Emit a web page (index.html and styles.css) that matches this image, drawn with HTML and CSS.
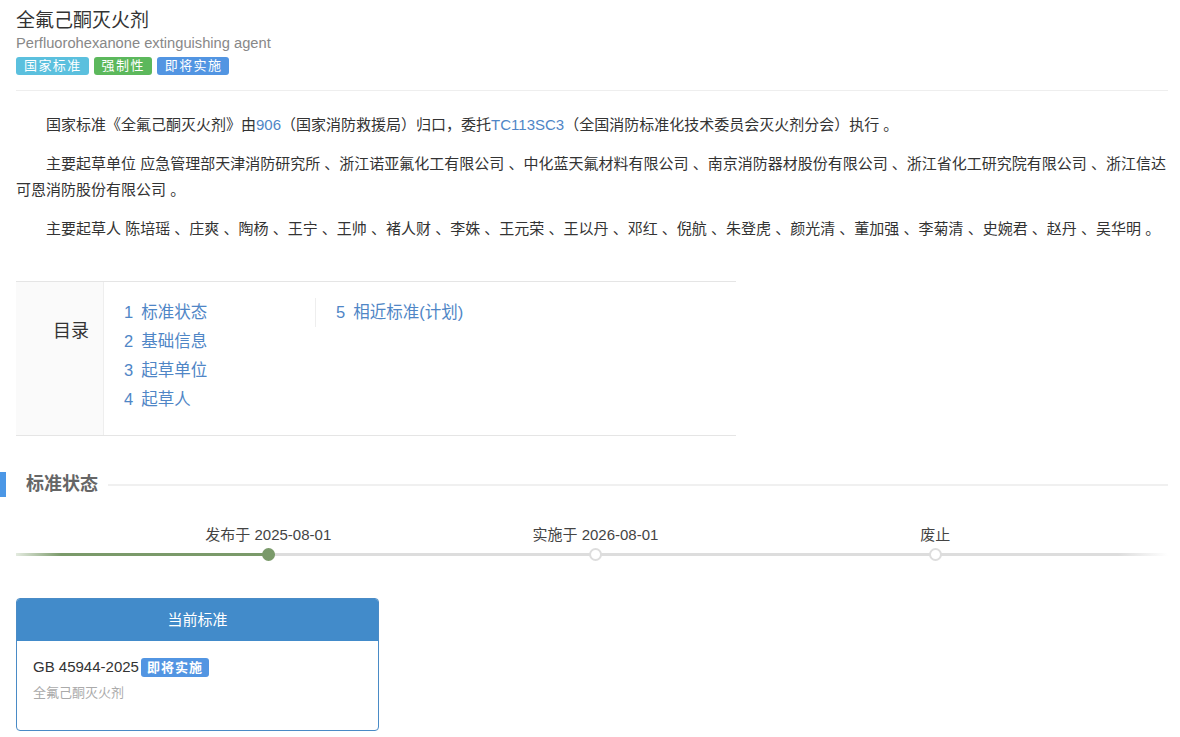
FILE: index.html
```html
<!DOCTYPE html>
<html lang="zh-CN">
<head>
    <meta charset="UTF-8">
    <meta name="viewport" content="width=device-width, initial-scale=1.0">
    <title>全氟己酮灭火剂</title>
    <link rel="stylesheet" href="styles.css">
</head>
<body>
    <div class="page">
        <div class="std-head">
            <h1 class="std-title">全氟己酮灭火剂</h1>
            <div class="std-en">Perfluorohexanone extinguishing agent</div>
            <div class="tags">
                <span class="tag tag-info">国家标准</span>
                <span class="tag tag-green">强制性</span>
                <span class="tag tag-blue">即将实施</span>
            </div>
        </div>

        <div class="intro">
            <p>国家标准《全氟己酮灭火剂》由<a href="#">906</a>（国家消防救援局）归口，委托<a href="#">TC113SC3</a>（全国消防标准化技术委员会灭火剂分会）执行 。</p>
            <p>主要起草单位 应急管理部天津消防研究所 、浙江诺亚氟化工有限公司 、中化蓝天氟材料有限公司 、南京消防器材股份有限公司 、浙江省化工研究院有限公司 、浙江信达可恩消防股份有限公司 。</p>
            <p>主要起草人 陈培瑶 、庄爽 、陶杨 、王宁 、王帅 、褚人财 、李姝 、王元荣 、王以丹 、邓红 、倪航 、朱登虎 、颜光清 、董加强 、李菊清 、史婉君 、赵丹 、吴华明 。</p>
        </div>

        <div class="toc">
            <div class="toc-label">目录</div>
            <ul class="toc-col">
                <li><a href="#"><span class="toc-num">1</span>标准状态</a></li>
                <li><a href="#"><span class="toc-num">2</span>基础信息</a></li>
                <li><a href="#"><span class="toc-num">3</span>起草单位</a></li>
                <li><a href="#"><span class="toc-num">4</span>起草人</a></li>
            </ul>
            <ul class="toc-col toc-col-split">
                <li><a href="#"><span class="toc-num">5</span>相近标准(计划)</a></li>
            </ul>
        </div>

        <div class="sec-head">
            <span class="sec-bar"></span>
            <h2 class="sec-title">标准状态</h2>
            <span class="sec-line"></span>
        </div>

        <div class="timeline">
            <div class="track"><div class="track-done" style="width: 21.9%"></div></div>
            <div class="point done" style="left: 21.9%">
                <span class="point-label">发布于 2025-08-01</span>
                <i class="dot"></i>
            </div>
            <div class="point" style="left: 50.3%">
                <span class="point-label">实施于 2026-08-01</span>
                <i class="dot"></i>
            </div>
            <div class="point" style="left: 79.8%">
                <span class="point-label">废止</span>
                <i class="dot"></i>
            </div>
        </div>

        <div class="cur-card">
            <div class="cur-card-head">当前标准</div>
            <div class="cur-card-body">
                <div class="cur-code">GB 45944-2025 <span class="tag tag-blue tag-bold">即将实施</span></div>
                <div class="cur-name">全氟己酮灭火剂</div>
            </div>
        </div>
    </div>
</body>
</html>
```

FILE: styles.css
```css
body {
    margin: 0;
    font-family: "Liberation Sans", Arial, "Noto Sans CJK SC", sans-serif;
    color: #333;
    background-color: #fff;
}

a {
    color: #4f86c6;
    text-decoration: none;
}

.page {
    padding: 8px 12px 0 16px;
}

/* 标题 */
.std-title {
    margin: 0;
    font-size: 19px;
    font-weight: normal;
    line-height: 26px;
    color: #333;
}

.std-en {
    font-size: 14.7px;
    line-height: 18px;
    color: #888;
}

.tags {
    display: flex;
    gap: 5px;
    margin-top: 5px;
}

.tag {
    display: inline-block;
    height: 18px;
    line-height: 18px;
    padding: 0 7px 0 8px;
    border-radius: 3px;
    font-size: 13px;
    letter-spacing: 1.4px;
    color: #fff;
}

.tag-info { background-color: #5bc0de; }
.tag-green { background-color: #5cb85c; }
.tag-blue { background-color: #5295e2; }

.std-head {
    padding-bottom: 15px;
    border-bottom: 1px solid #eee;
}

/* 简介 */
.intro {
    margin: 21px -6px 0 0;
}

.intro p {
    margin: 0 0 13px;
    font-size: 15px;
    line-height: 26px;
    text-indent: 2em;
}

/* 目录 */
.toc {
    display: flex;
    align-items: flex-start;
    width: 720px;
    margin-top: 39px;
    border-top: 1px solid #e5e5e5;
    border-bottom: 1px solid #e5e5e5;
}

.toc-label {
    align-self: stretch;
    width: 73px;
    padding: 34px 14px 0 0;
    text-align: right;
    font-size: 18px;
    background-color: #fafafa;
    border-right: 1px solid #eee;
}

.toc-col {
    list-style: none;
    width: 191px;
    margin: 16px 0 21px;
    padding: 0 0 0 20px;
}

.toc-col li {
    font-size: 16.5px;
    line-height: 29px;
}

.toc-col-split {
    border-left: 1px solid #eee;
}

.toc-num {
    margin-right: 8px;
}

/* 分节标题 */
.sec-head {
    display: flex;
    align-items: center;
    margin: 36px 0 0 -16px;
}

.sec-bar {
    width: 6px;
    height: 25px;
    background-color: #4b97e6;
}

.sec-title {
    margin: 0 0 0 20px;
    font-size: 18px;
    line-height: 25px;
    color: #666;
}

.sec-line {
    flex: 1;
    height: 2px;
    margin-left: 10px;
    background-color: #f0f0f0;
}

/* 时间轴 */
.timeline {
    position: relative;
    height: 44px;
    margin-top: 28px;
}

.track {
    position: absolute;
    left: 0;
    right: 0;
    top: 28px;
    height: 3px;
    background: linear-gradient(to right, #ddd calc(100% - 50px), rgba(221, 221, 221, 0));
}

.track-done {
    height: 3px;
    background: linear-gradient(to right, #e4ebe0, #7a9a6a 45px);
}

.point {
    position: absolute;
    top: 0;
    display: flex;
    flex-direction: column;
    align-items: center;
    transform: translateX(-50%);
}

.point-label {
    font-size: 15px;
    line-height: 20px;
    white-space: nowrap;
    color: #444;
}

.dot {
    box-sizing: border-box;
    width: 13px;
    height: 13px;
    margin-top: 3px;
    border: 2px solid #ddd;
    border-radius: 50%;
    background-color: #fff;
}

.point.done .dot {
    border-color: #7a9a6a;
    background-color: #7a9a6a;
}

/* 当前标准 */
.cur-card {
    width: 361px;
    margin-top: 29px;
    border: 1px solid #4a8bc6;
    border-radius: 4px;
    overflow: hidden;
}

.cur-card-head {
    height: 42px;
    line-height: 42px;
    text-align: center;
    font-size: 15px;
    color: #fff;
    background-color: #428bca;
}

.cur-card-body {
    padding: 15px 16px 28px;
}

.cur-code {
    font-size: 15px;
    line-height: 22px;
}

.tag-bold {
    height: 19px;
    line-height: 19px;
    padding: 0 6px;
    margin-left: -2px;
    font-weight: bold;
    letter-spacing: 1px;
}

.cur-name {
    margin-top: 6px;
    font-size: 13px;
    line-height: 18px;
    color: #aaa;
}
```
